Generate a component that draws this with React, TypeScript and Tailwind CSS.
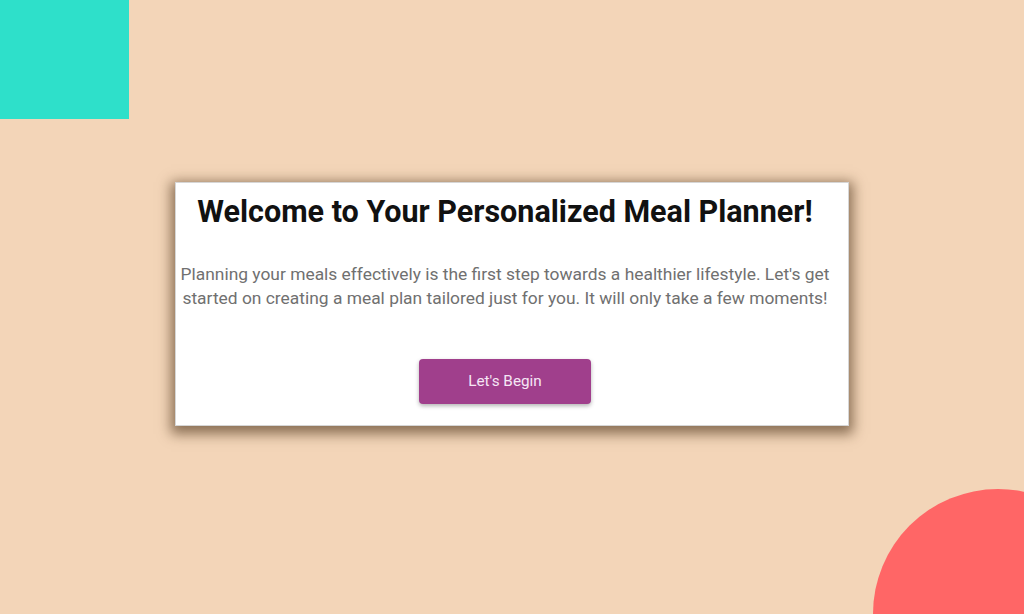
import React from "react";

export default function App() {
  return (
    <div
      className="relative h-[614px] w-[1024px] overflow-hidden bg-[#F3D5B8] flex items-center justify-center"
      style={{ fontFamily: "Roboto, 'Liberation Sans', sans-serif" }}
    >
      <div className="absolute left-0 top-0 h-[119px] w-[129px] bg-[#2EE0CA]" />
      <div className="absolute left-[873px] top-[489px] h-[250px] w-[250px] rounded-full bg-[#FF6666]" />
      <div className="relative mt-[-7px] w-[674px] border border-[#d6d6d6] bg-white pl-[3px] pr-[17px] pt-[10px] pb-[21px] shadow-[0_4px_12px_4px_rgba(70,45,20,0.6)] flex flex-col items-center">
        <h1 className="text-[30.5px] font-bold leading-[37px] text-[#111] whitespace-nowrap">
          Welcome to Your Personalized Meal Planner!
        </h1>
        <p className="mt-[32px] text-center text-[17.4px] leading-[24px] text-[#707070]">
          Planning your meals effectively is the first step towards a healthier lifestyle. Let's get
          started on creating a meal plan tailored just for you. It will only take a few moments!
        </p>
        <button className="mt-[49px] h-[45px] w-[172px] rounded-[4px] bg-[#A03F8C] text-[15.3px] text-[#f5e6f5] shadow-[0_2px_4px_rgba(0,0,0,0.3)]">
          Let's Begin
        </button>
      </div>
    </div>
  );
}
